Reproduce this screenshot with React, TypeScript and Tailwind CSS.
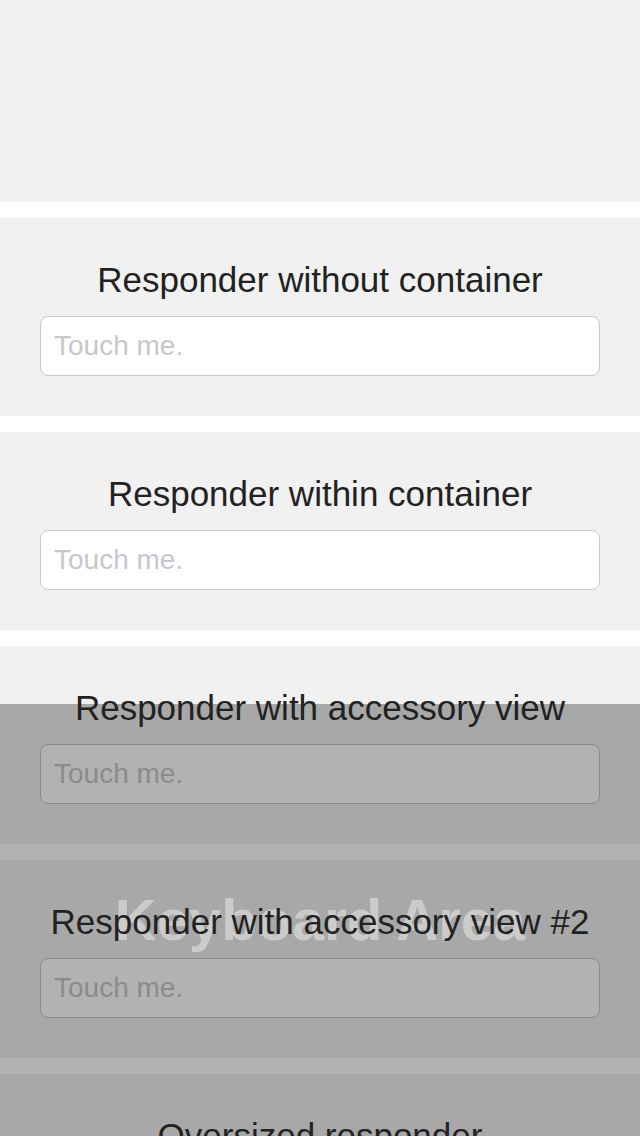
const sections = [
  "Responder without container",
  "Responder within container",
  "Responder with accessory view",
  "Responder with accessory view #2",
  "Oversized responder",
];

function Section({ title }: { title: string }) {
  return (
    <div className="h-[198px] shrink-0 bg-[#f1f1f1] flex flex-col items-center pt-[41px] gap-[15px]">
      <h2 className="relative z-20 text-[35px] leading-[42px] text-[#222222] text-center whitespace-nowrap">
        {title}
      </h2>
      <div className="w-[560px] h-[60px] bg-white border border-[#c8c8c8] rounded-[8px] flex items-center px-[13px]">
        <span className="text-[28px] leading-none text-[#c7c7cd]">Touch me.</span>
      </div>
    </div>
  );
}

export default function App() {
  return (
    <div
      className="relative w-[640px] h-[1136px] overflow-hidden bg-white"
      style={{ fontFamily: '"Liberation Sans", Arial, sans-serif' }}
    >
      <div className="flex flex-col gap-4">
        {/* Header area */}
        <div className="h-[202px] shrink-0 bg-[#f1f1f1]" />
        {sections.map((s) => (
          <Section key={s} title={s} />
        ))}
      </div>

      {/* Keyboard placeholder overlay */}
      <div className="absolute left-0 right-0 bottom-0 h-[432px] z-10 bg-black/30 flex items-center justify-center">
        <span className="text-[58px] leading-none font-bold text-white/40 whitespace-nowrap">
          Keyboard Area
        </span>
      </div>
    </div>
  );
}
